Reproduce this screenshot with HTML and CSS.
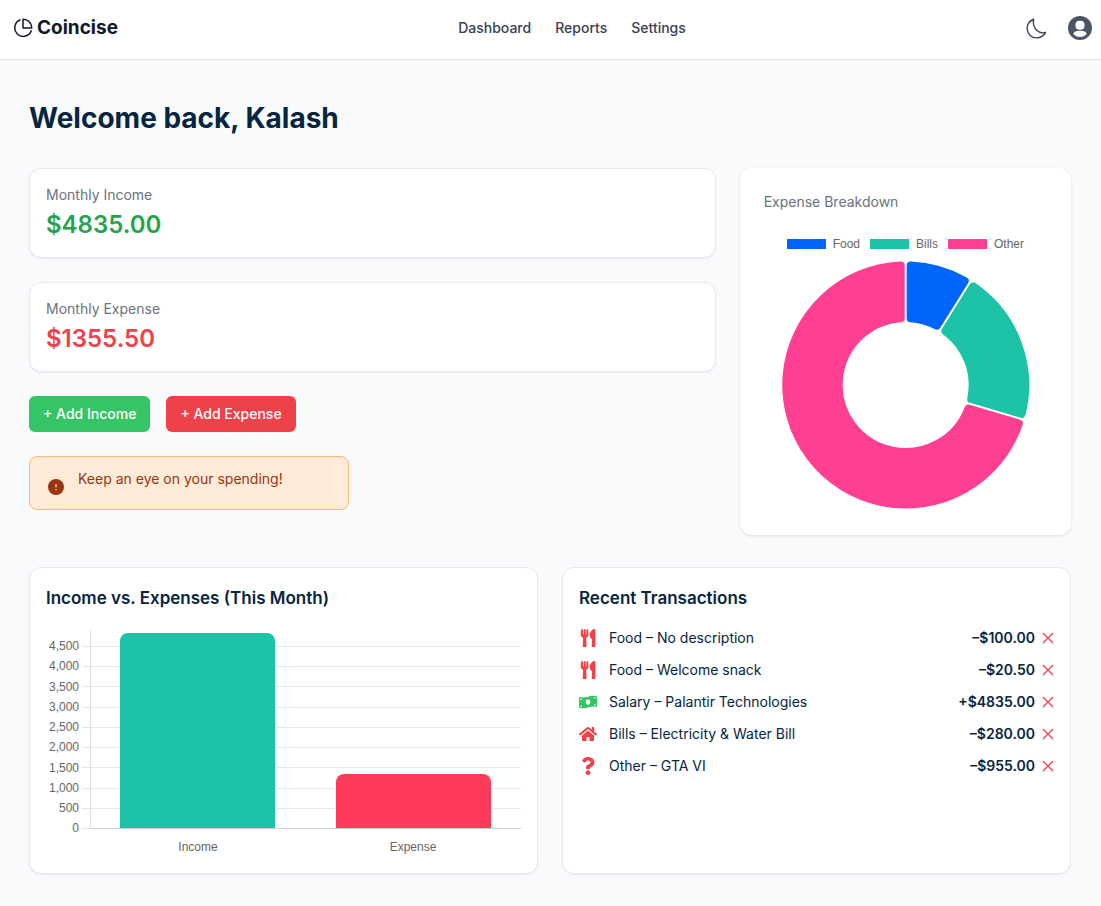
FILE: index.html
```html
<!DOCTYPE html>
<html lang="en">
<head>
<meta charset="utf-8">
<meta name="viewport" content="width=device-width, initial-scale=1">
<title>Coincise</title>
<link rel="stylesheet" href="styles.css">
</head>
<body>
<svg class="sprite" aria-hidden="true">
  <symbol id="i-food" viewBox="0 0 416 512"><path d="M207.900 15.200c.8 4.700 16.100 94.500 16.100 128.800 0 52.300-27.800 89.600-68.900 104.600L168 486.700c.7 13.700-10.200 25.300-24 25.300H80c-13.700 0-24.700-11.500-24-25.300l12.900-238.100C27.700 233.600 0 196.200 0 144 0 109.600 15.300 19.900 16.100 15.200 19.300-5.100 61.400-5.400 64 16.300v141.200c1.300 3.400 15.100 3.200 16 0 1.400-25.300 7.900-139.200 8-141.800 3.300-20.800 44.700-20.800 47.900 0 .2 2.700 6.600 116.500 8 141.800.9 3.200 14.800 3.400 16 0V16.300c2.600-21.600 44.800-21.400 48-1.100zm119.200 285.700l-15 185.100c-1.200 14 9.900 26 23.900 26h56c13.300 0 24-10.700 24-24V24c0-13.200-10.700-24-24-24-82.500 0-221.400 178.500-64.900 300.900z"/></symbol>
  <symbol id="i-money" viewBox="0 0 640 512"><path d="M621.160 54.460C582.370 38.190 543.550 32 504.750 32c-123.170-.01-246.330 62.340-369.500 62.340-30.890 0-61.760-3.920-92.650-13.720-3.470-1.100-6.950-1.620-10.350-1.620C15.040 79 0 92.320 0 110.810v317.260c0 12.630 7.230 24.600 18.840 29.460C57.630 473.810 96.450 480 135.250 480c123.170 0 246.340-62.350 369.510-62.350 30.890 0 61.760 3.920 92.650 13.720 3.470 1.100 6.950 1.620 10.350 1.620 17.210 0 32.250-13.320 32.250-31.810V83.930c-.01-12.640-7.240-24.600-18.850-29.470zM48 132.220c20.120 5.040 41.120 7.570 62.720 8.930C104.840 170.540 79 192.690 48 192.690v-60.470zm0 285v-47.780c34.370 0 62.180 27.270 63.710 61.400-22.530-1.810-43.590-6.310-63.710-13.620zM320 352c-44.190 0-80-42.990-80-96 0-53.020 35.820-96 80-96s80 42.980 80 96c0 53.030-35.830 96-80 96zm272 27.780c-17.520-4.390-35.710-6.850-54.320-8.440 5.870-26.080 27.500-45.880 54.320-49.280v57.720zm0-236.110c-30.890-3.910-54.860-29.700-55.810-61.550 19.540 2.170 38.090 6.230 55.810 12.660v48.890z"/></symbol>
  <symbol id="i-home" viewBox="0 0 576 512"><path d="M280.370 148.260L96 300.110V464a16 16 0 0 0 16 16l112.060-.29a16 16 0 0 0 15.920-16V368a16 16 0 0 1 16-16h64a16 16 0 0 1 16 16v95.640a16 16 0 0 0 16 16.050L464 480a16 16 0 0 0 16-16V300L295.670 148.260a12.190 12.190 0 0 0-15.300 0zM571.600 251.470L488 182.560V44.050a12 12 0 0 0-12-12h-56a12 12 0 0 0-12 12v72.610L318.470 43a48 48 0 0 0-61 0L4.340 251.470a12 12 0 0 0-1.600 16.900l25.500 31A12 12 0 0 0 45.150 301l235.220-193.740a12.190 12.190 0 0 1 15.300 0L530.900 301a12 12 0 0 0 16.900-1.600l25.500-31a12 12 0 0 0-1.700-16.930z"/></symbol>
  <symbol id="i-question" viewBox="0 0 384 512"><path d="M202.021 0C122.202 0 70.503 32.703 29.914 91.026c-7.363 10.580-5.093 25.086 5.178 32.874l43.138 32.709c10.373 7.865 25.132 6.026 33.253-4.148 25.049-31.381 43.630-49.449 82.757-49.449 30.764 0 68.816 19.799 68.816 49.631 0 22.552-18.617 34.134-48.993 51.164-35.423 19.860-82.299 44.576-82.299 106.405V320c0 13.255 10.745 24 24 24h72.471c13.255 0 24-10.745 24-24v-5.773c0-42.860 125.268-44.645 125.268-160.627C377.504 66.256 286.902 0 202.021 0zM192 373.459c-38.196 0-69.271 31.075-69.271 69.271 0 38.195 31.075 69.270 69.271 69.270s69.271-31.075 69.271-69.271-31.075-69.270-69.271-69.270z"/></symbol>
  <symbol id="i-x" viewBox="0 0 12 12"><path d="M1 1l10 10M11 1L1 11" fill="none" stroke="currentColor" stroke-width="1.300"/></symbol>
</svg>

<header class="topbar">
  <a class="brand" href="#">
    <svg class="brand-icon" viewBox="0 0 20 20" aria-hidden="true"><path d="M7.500 1.800A8.500 8.500 0 1 0 18.400 12.300M10 1.200V10h8.800A8.800 8.800 0 0 0 10 1.200z"/></svg>
    <span>Coincise</span>
  </a>
  <nav class="nav">
    <a href="#">Dashboard</a>
    <a href="#">Reports</a>
    <a href="#">Settings</a>
  </nav>
  <div class="tools">
    <button class="icon-button" type="button" aria-label="Toggle dark mode">
      <svg class="moon" viewBox="0 0 20 20" aria-hidden="true"><path d="M7.300 1.200C3.600 2.600 1.100 6 1.100 10c0 5 4 8.900 8.900 8.900 3.800 0 7.100-2.100 8.700-5.200-2 .6-5.800.6-8.700-2.300C7.300 8.700 6.500 4.800 7.300 1.200z"/></svg>
    </button>
    <button class="icon-button" type="button" aria-label="Account">
      <svg class="avatar" viewBox="0 0 24 24" aria-hidden="true"><circle cx="12" cy="12" r="12" fill="#4b5563"/><rect x="7.500" y="4.800" width="9" height="9" rx="4" fill="#fff"/><path d="M5.300 18c.5-2.400 3-3.200 6.700-3.200s6.200.8 6.700 3.200c-1.700 2-4 3-6.700 3s-5-1-6.700-3z" fill="#fff"/></svg>
    </button>
  </div>
</header>

<main class="page">
  <h1 class="welcome">Welcome back, Kalash</h1>

  <div class="overview">
    <div class="summary">
      <section class="card">
        <h2 class="label">Monthly Income</h2>
        <p class="value income">$4835.00</p>
      </section>
      <section class="card">
        <h2 class="label">Monthly Expense</h2>
        <p class="value expense">$1355.50</p>
      </section>
      <div class="actions">
        <button class="button add-income" type="button">+ Add Income</button>
        <button class="button add-expense" type="button">+ Add Expense</button>
      </div>
      <div class="alert" role="status">
        <svg class="alert-icon" viewBox="0 0 16 16" aria-hidden="true"><circle cx="8" cy="8" r="8" fill="#9a3412"/><path d="M8 5v3.600M8 10v1.200" stroke="#f3c6a4" stroke-width="1.400"/></svg>
        <span>Keep an eye on your spending!</span>
      </div>
    </div>

    <section class="breakdown">
      <h2 class="label">Expense Breakdown</h2>
      <div class="donut-chart">
        <ul class="legend">
          <li><span class="swatch food"></span>Food</li>
          <li><span class="swatch bills"></span>Bills</li>
          <li><span class="swatch other"></span>Other</li>
        </ul>
        <svg class="donut" viewBox="-124 -124 248 248" role="img" aria-label="Expenses by category">
          <path class="slice food" d="M5-119.400A119.500 119.500 0 0 1 59-103.900L31.200-59.300A67 67 0 0 0 5-66.800z"/>
          <path class="slice bills" d="M67.500-98.600A119.500 119.500 0 0 1 116 28.900L65.500 14A67 67 0 0 0 39.600-54z"/>
          <path class="slice other" d="M113.200 38.500A119.500 119.500 0 1 1-5-119.400L-5-66.800A67 67 0 1 0 62.700 23.600z"/>
        </svg>
      </div>
    </section>
  </div>

  <div class="details">
    <section class="card">
      <h2 class="card-title">Income vs. Expenses (This Month)</h2>
      <svg class="bars" viewBox="0 0 475 232" role="img" aria-label="Income 4835, expense 1355.50">
        <path class="grid" d="M36 21.500H475M36 41.500H475M36 61.500H475M36 82.500H475M36 102.500H475M36 122.500H475M36 142.500H475M36 163.500H475M36 183.500H475M36 203.500H45"/>
        <path class="axis" d="M44.500 5V204"/>
        <path fill="#1dc3a7" d="M74 203V16a8 8 0 0 1 8-8H221a8 8 0 0 1 8 8V203z"/>
        <path fill="#ff3b5c" d="M290 203V157a8 8 0 0 1 8-8H437a8 8 0 0 1 8 8V203z"/>
        <path class="baseline" d="M44 203.500H475"/>
        <g class="ticks" text-anchor="end">
          <text x="33" y="25">4,500</text>
          <text x="33" y="45">4,000</text>
          <text x="33" y="66">3,500</text>
          <text x="33" y="86">3,000</text>
          <text x="33" y="106">2,500</text>
          <text x="33" y="126">2,000</text>
          <text x="33" y="147">1,500</text>
          <text x="33" y="167">1,000</text>
          <text x="33" y="187">500</text>
          <text x="33" y="207">0</text>
        </g>
        <g class="ticks" text-anchor="middle">
          <text x="152" y="226">Income</text>
          <text x="367" y="226">Expense</text>
        </g>
      </svg>
    </section>

    <section class="card">
      <h2 class="card-title">Recent Transactions</h2>
      <ul class="transactions">
        <li>
          <svg class="kind" aria-hidden="true"><use href="#i-food"/></svg>
          <span class="what">Food – No description</span>
          <span class="amount">–$100.00</span>
          <button class="remove" type="button" aria-label="Delete Food – No description"><svg aria-hidden="true"><use href="#i-x"/></svg></button>
        </li>
        <li>
          <svg class="kind" aria-hidden="true"><use href="#i-food"/></svg>
          <span class="what">Food – Welcome snack</span>
          <span class="amount">–$20.50</span>
          <button class="remove" type="button" aria-label="Delete Food – Welcome snack"><svg aria-hidden="true"><use href="#i-x"/></svg></button>
        </li>
        <li>
          <svg class="kind positive" aria-hidden="true"><use href="#i-money"/></svg>
          <span class="what">Salary – Palantir Technologies</span>
          <span class="amount">+$4835.00</span>
          <button class="remove" type="button" aria-label="Delete Salary – Palantir Technologies"><svg aria-hidden="true"><use href="#i-x"/></svg></button>
        </li>
        <li>
          <svg class="kind" aria-hidden="true"><use href="#i-home"/></svg>
          <span class="what">Bills – Electricity &amp; Water Bill</span>
          <span class="amount">–$280.00</span>
          <button class="remove" type="button" aria-label="Delete Bills – Electricity &amp; Water Bill"><svg aria-hidden="true"><use href="#i-x"/></svg></button>
        </li>
        <li>
          <svg class="kind" aria-hidden="true"><use href="#i-question"/></svg>
          <span class="what">Other – GTA VI</span>
          <span class="amount">–$955.00</span>
          <button class="remove" type="button" aria-label="Delete Other – GTA VI"><svg aria-hidden="true"><use href="#i-x"/></svg></button>
        </li>
      </ul>
    </section>
  </div>
</main>
</body>
</html>
```

FILE: styles.css
```css
* { box-sizing: border-box; }

body {
  margin: 0;
  min-height: 100vh;
  background: #f8fafc;
  color: #062540;
  font: 14px/20px Inter, "Liberation Sans", sans-serif;
}

h1, h2, p, ul { margin: 0; padding: 0; }
ul { list-style: none; }
a { color: inherit; text-decoration: none; }
svg { display: block; }
button { border: 0; font: inherit; cursor: pointer; }
.sprite { display: none; }

.topbar {
  display: flex;
  align-items: center;
  justify-content: space-between;
  padding: 14px 9px 17px 13px;
  background: #fff;
  border-bottom: 1px solid #e2e4e8;
}
.brand {
  display: flex;
  align-items: center;
  gap: 4px;
  color: #111827;
  font-size: 19px;
  line-height: 28px;
  font-weight: 700;
}
.brand-icon { width: 20px; height: 20px; fill: none; stroke: currentColor; stroke-width: 1.5; stroke-linejoin: round; }
.nav { display: flex; gap: 24px; color: #374151; font-weight: 500; }
.tools { display: flex; align-items: center; gap: 21px; }
.icon-button { padding: 0; background: none; }
.moon { width: 21px; height: 21px; fill: none; stroke: #374151; stroke-width: 1.3; stroke-linejoin: round; }
.avatar { width: 24px; height: 24px; }

.page { padding: 40px 30px 32px 29px; }
.welcome { margin-bottom: 32px; font-size: 28px; line-height: 36px; font-weight: 700; }

.overview {
  display: grid;
  grid-template-columns: repeat(3, minmax(0, 1fr));
  gap: 24px;
  margin-bottom: 32px;
  align-items: start;
}
.summary { grid-column: span 2; display: grid; gap: 24px; }
.card {
  padding: 16px;
  background: #fff;
  border: 1px solid #e5e9f0;
  border-radius: 12px;
  box-shadow: 0 1px 2px rgba(0, 0, 0, .06);
}
.label { color: #6b7280; font-size: 14px; line-height: 20px; font-weight: 400; }
.value { margin-top: 4px; font-size: 24px; line-height: 32px; font-weight: 600; }
.income { color: #27a350; }
.expense { color: #ef4149; }
.actions { display: flex; gap: 16px; }
.button { padding: 8px 14px; border-radius: 6px; color: #fff; font-weight: 500; }
.add-income { background: #35c566; }
.add-expense { background: #ef4149; }
.alert {
  display: flex;
  gap: 14px;
  width: 320px;
  max-width: 100%;
  padding: 12px 18px;
  align-items: start;
  background: #ffebd7;
  border: 1px solid #fdba74;
  border-radius: 8px;
  color: #9a3412;
}
.alert-icon { width: 16px; height: 16px; margin: 10px 0 2px; }

.breakdown {
  padding: 24px;
  background: #fff;
  border-radius: 12px;
  box-shadow: 0 1px 3px rgba(0, 0, 0, .12);
}
.donut-chart { padding: 26px 0 2px; }
.legend {
  display: flex;
  justify-content: center;
  gap: 10px;
  margin-bottom: 11px;
  color: #666;
  font: 12px/12px "Liberation Sans", Arial, sans-serif;
}
.legend li { display: flex; align-items: center; gap: 7px; }
.swatch { width: 39px; height: 10px; }
.swatch.food { background: #0066fa; }
.swatch.bills { background: #1dc3a7; }
.swatch.other { background: #ff4092; }
.donut { width: 100%; height: 248px; }
.slice { stroke-width: 8; stroke-linejoin: round; }
.slice.food { fill: #0066fa; stroke: #0066fa; }
.slice.bills { fill: #1dc3a7; stroke: #1dc3a7; }
.slice.other { fill: #ff4092; stroke: #ff4092; }

.details { display: grid; grid-template-columns: repeat(2, minmax(0, 1fr)); gap: 24px; }
.card-title { margin-bottom: 13px; font-size: 17px; line-height: 28px; font-weight: 600; }
.bars { width: 100%; height: auto; }
.grid { stroke: #e2e8f0; }
.axis { stroke: #dfe1e5; }
.baseline { stroke: #cdd0d6; }
.ticks { fill: #666; font: 12px "Liberation Sans", Arial, sans-serif; }

.transactions { display: grid; gap: 12px; padding-top: 3px; }
.transactions li { display: flex; align-items: center; }
.kind { width: 18px; height: 18px; margin-right: 12px; fill: #ef4149; }
.positive { fill: #35c566; }
.what { flex: 1; }
.amount { margin-right: 7px; font-weight: 600; }
.remove { padding: 0; background: none; color: #ef4149; }
.remove svg { width: 12px; height: 12px; }
```
